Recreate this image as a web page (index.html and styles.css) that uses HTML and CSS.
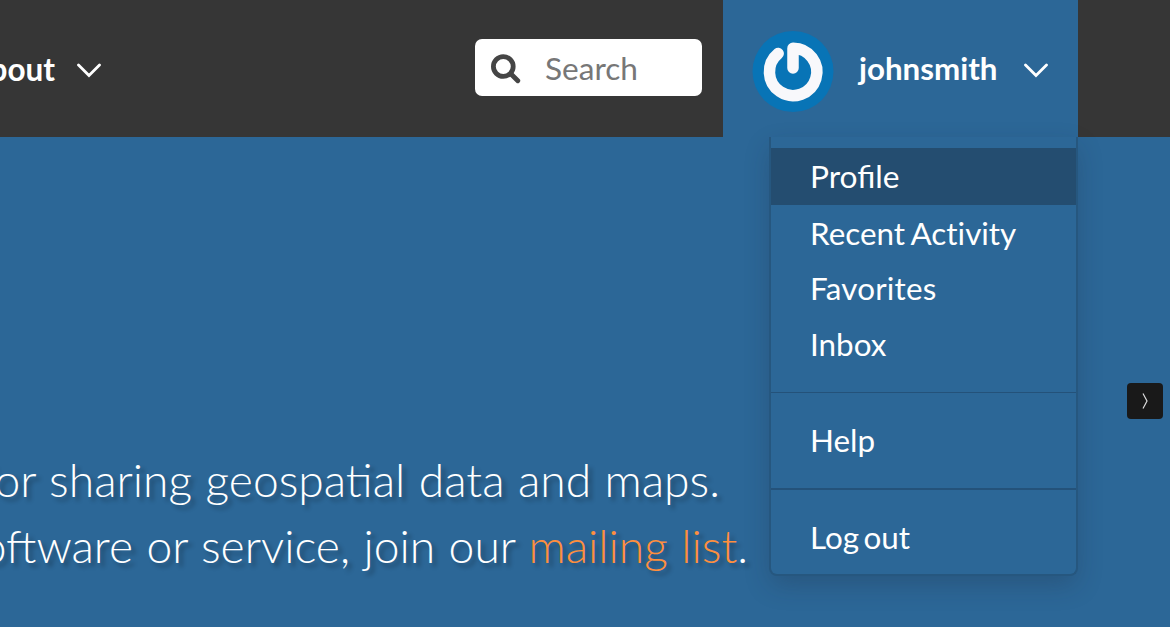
FILE: index.html
```html
<!DOCTYPE html>
<html lang="en">
<head>
<meta charset="utf-8">
<title>Home</title>
<link rel="stylesheet" href="styles.css">
</head>
<body>
<header class="navbar">
  <div class="nav-about"><span class="nav-label">About</span>
    <svg class="chevron" viewBox="0 0 24 16"><path d="M1.5 2 12 12.5 22.5 2"/></svg>
  </div>
  <label class="search">
    <svg class="search-icon" viewBox="0 0 30 30"><circle cx="12.3" cy="12.5" r="9.9"/><path d="M20 20l6.8 6.8"/></svg>
    <input class="search-input" type="text" placeholder="Search">
  </label>
  <div class="user">
    <svg class="avatar" viewBox="0 0 82 82">
      <circle class="avatar-disc" cx="41" cy="40.5" r="40.5"/>
      <path class="avatar-mark" d="M26.200 22.500A23.700 23.700 0 1 0 41 17.200V37"/>
    </svg>
    <span class="user-name">johnsmith</span>
    <svg class="chevron" viewBox="0 0 24 16"><path d="M1.5 2 12 12.5 22.5 2"/></svg>
    <nav class="menu">
      <a class="menu-item active">Profile</a>
      <a class="menu-item plain">Recent Activity</a>
      <a class="menu-item wide">Favorites</a>
      <a class="menu-item">Inbox</a>
      <hr class="divider">
      <a class="menu-item">Help</a>
      <hr class="divider thick">
      <a class="menu-item tight">Log out</a>
    </nav>
  </div>
</header>
<main class="hero">
  <div class="hero-copy">
    <p class="line first">for sharing geospatial data and maps.</p>
    <p class="line second">software or service, join our <a class="link">mailing list</a>.</p>
  </div>
  <button class="next" aria-label="Next"><svg class="next-icon" viewBox="0 0 6 16"><path d="M1 .5 5 8 1 15.5"/></svg></button>
</main>
</body>
</html>
```
FILE: styles.css
```css
* { box-sizing: border-box; }
body {
  margin: 0;
  width: 1170px;
  height: 627px;
  overflow: hidden;
  background: #2c6797;
  color: #fff;
  font-family: Lato, "Liberation Sans", sans-serif;
}
.navbar {
  display: flex;
  height: 137px;
  background: #363636;
}
.nav-about {
  display: flex;
  align-items: center;
  justify-content: flex-end;
  gap: 22px;
  width: 101px;
  height: 139px;
  font-size: 31.5px;
  font-weight: 700;
}
.nav-label { margin-bottom: 2px; }
.chevron {
  flex: none;
  width: 24px;
  height: 16px;
  margin-top: 3px;
  fill: none;
  stroke: #fff;
  stroke-width: 2.8;
  stroke-linecap: round;
}
.search {
  display: flex;
  align-items: center;
  gap: 24px;
  width: 227px;
  height: 57px;
  margin: 39px 21px 0 374px;
  padding-left: 16px;
  border-radius: 7px;
  background: #fff;
}
.search-icon {
  flex: none;
  width: 30px;
  height: 30px;
  margin-top: 3px;
  fill: none;
  stroke: #454545;
  stroke-width: 4.8;
  stroke-linecap: round;
}
.search-input {
  width: 140px;
  height: 50px;
  margin-top: 1px;
  padding: 0;
  border: 0;
  background: none;
  outline: none;
  font: 400 31.6px Lato, sans-serif;
}
.search-input::placeholder { color: #777; }
.user {
  position: relative;
  display: flex;
  align-items: center;
  width: 355px;
  height: 139px;
  padding: 0 0 0 29px;
  background: #2c6797;
}
.avatar {
  flex: none;
  width: 82px;
  height: 82px;
  margin-top: 4px;
}
.avatar-disc { fill: #0874b6; }
.avatar-mark {
  fill: none;
  stroke: #f8f8fb;
  stroke-width: 11.5;
  stroke-linecap: round;
  stroke-linejoin: round;
}
.user-name {
  width: 139px;
  margin: 0 26px 3px 25px;
  font-size: 31.3px;
  font-weight: 700;
}
.menu {
  position: absolute;
  top: 137px;
  left: 46px;
  width: 309px;
  height: 439px;
  padding-top: 11px;
  border: 2px solid #26577f;
  border-top: 0;
  border-radius: 0 0 8px 8px;
  background: #2c6797;
  box-shadow: 0 10px 26px -2px rgba(30, 35, 50, .25);
}
.menu-item {
  display: block;
  height: 56px;
  padding-left: 39px;
  font-size: 31.4px;
  line-height: 55px;
}
.active {
  height: 57px;
  font-size: 31.7px;
  line-height: 57px;
  background: #244d70;
}
.plain {
  font-variant-ligatures: none;
  line-height: 57px;
  word-spacing: -1.5px;
}
.wide { letter-spacing: .2px; }
.tight { word-spacing: -3.5px; }
.divider {
  height: 1px;
  margin: 19px 0 20px;
  border: 0;
  background: #24527a;
}
.thick {
  height: 2px;
  margin: 19px 0 20px;
}
.hero {
  display: flex;
  justify-content: space-between;
  height: 490px;
}
.hero-copy {
  width: 748px;
  padding-top: 309px;
}
.line {
  display: flex;
  justify-content: flex-end;
  height: 66px;
  margin: 0;
  font-size: 46.2px;
  font-weight: 300;
  line-height: 66px;
  word-spacing: .9px;
  white-space: pre;
  text-shadow: 4px 4px 4px rgba(0, 0, 0, .3);
}
.first { padding-right: 28px; }
.link { color: #ff8f3e; }
.next {
  display: flex;
  align-items: center;
  justify-content: center;
  width: 36px;
  height: 36px;
  margin: 246px 7px 0 0;
  padding: 0;
  border: 0;
  border-radius: 4px;
  background: #191919;
}
.next-icon {
  width: 6px;
  height: 16px;
  fill: none;
  stroke: #ddd;
  stroke-width: 1.2;
}
```
